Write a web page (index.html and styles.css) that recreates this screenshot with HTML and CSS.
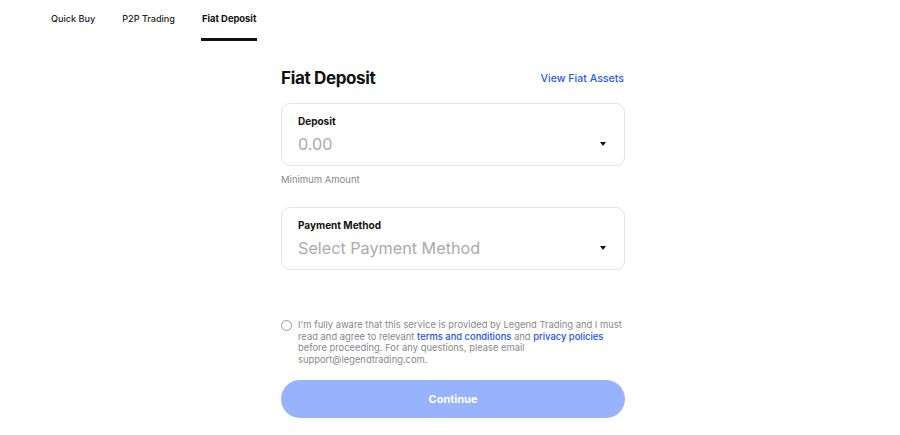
FILE: index.html
```html
<!DOCTYPE html>
<html>
<head>
<meta charset="utf-8">
<link rel="stylesheet" href="styles.css">
</head>
<body>
<nav class="tabs">
  <a class="tab">Quick Buy</a>
  <a class="tab">P2P Trading</a>
  <a class="tab active">Fiat Deposit</a>
</nav>
<main class="main">
  <div class="form">
    <div class="head">
      <h1 class="title">Fiat Deposit</h1>
      <a class="link">View Fiat Assets</a>
    </div>
    <div class="field">
      <div class="label">Deposit</div>
      <div class="row">
        <span class="value">0.00</span>
        <span class="caret"></span>
      </div>
    </div>
    <div class="hint">Minimum Amount</div>
    <div class="field field-pay">
      <div class="label">Payment Method</div>
      <div class="row">
        <span class="value">Select Payment Method</span>
        <span class="caret"></span>
      </div>
    </div>
    <div class="agree">
      <span class="radio"></span>
      <p class="agree-text">I'm fully aware that this service is provided by Legend Trading and I must read and agree to relevant <a class="blue">terms and conditions</a> and <a class="blue">privacy policies</a> before proceeding. For any questions, please email support@legendtrading.com.</p>
    </div>
    <button class="btn">Continue</button>
  </div>
</main>
</body>
</html>
```
FILE: styles.css
```css
* { box-sizing: border-box; }
html, body { margin: 0; padding: 0; background: #fff; }
body { font-family: Inter, "Noto Sans", sans-serif; color: #111; }
.tabs { display: flex; gap: 27px; padding-left: 51px; height: 41px; }
.tab { font-size: 9.1px; font-weight: 500; color: #222; padding-top: 13px; height: 41px; }
.tab.active { font-size: 9.4px; font-weight: 700; color: #111; border-bottom: 3px solid #111; padding-left: 1px; padding-right: 1px; margin-left: -1px; }
.main { display: flex; justify-content: center; padding-left: 6px; }
.form { width: 344px; padding-top: 27px; }
.head { display: flex; justify-content: space-between; align-items: center; height: 20px; }
.title { margin: 0; font-size: 17px; font-weight: 700; letter-spacing: -0.35px; color: #111; }
.link { font-size: 10.6px; color: #1f5af6; font-weight: 500; margin-right: 1px; }
.field { margin-top: 15px; border: 1px solid #e3e3e3; border-radius: 9px; height: 63px; padding: 10px 17px 0 16px; }
.field-pay { margin-top: 21px; }
.label { font-size: 10px; font-weight: 700; color: #111; line-height: 14px; }
.row { display: flex; justify-content: space-between; align-items: center; margin-top: 4px; }
.value { font-size: 16.2px; color: #aaa; line-height: 24px; }
.caret { width: 0; height: 0; border-left: 3.5px solid transparent; border-right: 3.5px solid transparent; border-top: 4px solid #111; margin-right: 1px; }
.hint { font-size: 9.5px; color: #888; margin-top: 8px; line-height: 12px; }
.agree { display: flex; gap: 6px; margin-top: 49px; }
.radio { flex: none; width: 11px; height: 11px; border: 1px solid #999; border-radius: 50%; margin-top: 1px; }
.agree-text { margin: 0; font-size: 9.4px; line-height: 11.5px; color: #888; width: 330px; }
.blue { color: #1f4ff2; font-weight: 500; line-height: 11.5px; }
.btn { display: block; width: 344px; height: 38px; margin-top: 15px; border: none; border-radius: 19px; background: #97b3fe; color: #fff; font-family: Inter, sans-serif; font-size: 11px; font-weight: 700; }
```
